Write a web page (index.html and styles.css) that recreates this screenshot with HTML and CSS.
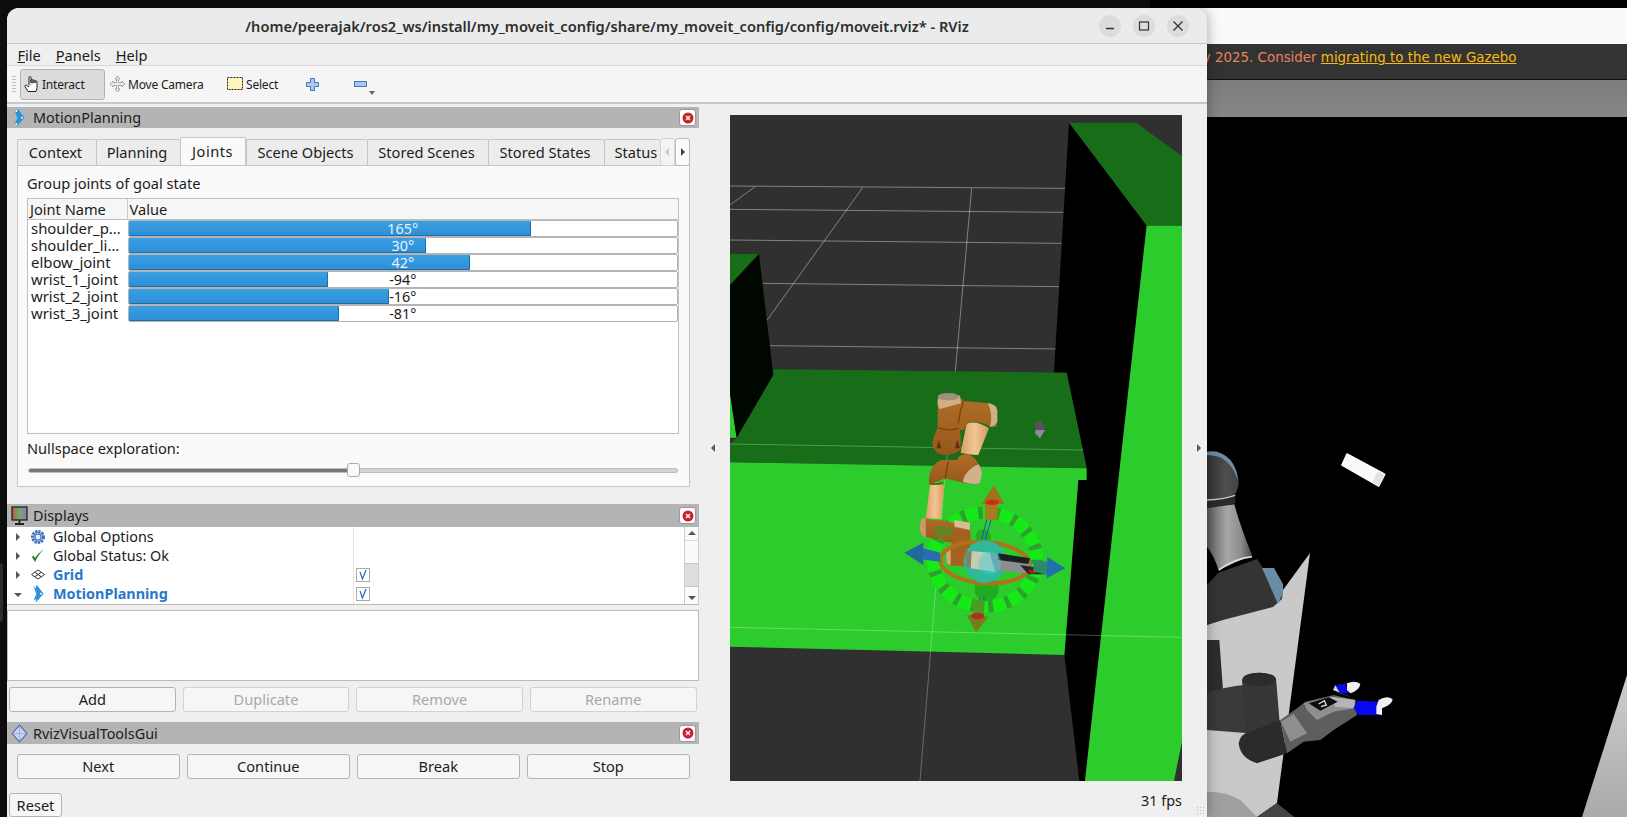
FILE: index.html
```html
<!DOCTYPE html>
<html lang="en">
<head>
    <meta charset="UTF-8">
    <title>RViz</title>
    <link rel="stylesheet" href="styles.css">
</head>
<body>

    <!-- browser window behind rviz -->
    <div class="browser">
        <div class="browser-top"></div>
        <div class="banner">January 2025. Consider <a href="#">migrating to the new Gazebo</a></div>
        <div class="browser-strip"></div>
        <svg class="browser-scene" viewBox="1150 0 477 817">
            <defs>
                <linearGradient id="link" x1="0" y1="0" x2="1" y2="0"><stop offset="0" stop-color="#5c5c5c"/><stop offset=".45" stop-color="#a8a8a8"/><stop offset=".75" stop-color="#8c8c8c"/><stop offset="1" stop-color="#4c4c4c"/></linearGradient>
                <linearGradient id="upper" x1="0" y1="0" x2="1" y2="0"><stop offset="0" stop-color="#333"/><stop offset=".6" stop-color="#4e4e4e"/><stop offset="1" stop-color="#444"/></linearGradient>
                <linearGradient id="floor" x1="0" y1="0" x2="0" y2="1"><stop offset="0" stop-color="#cdcdcd"/><stop offset="1" stop-color="#aaa"/></linearGradient>
            </defs>
            <rect x="1150" width="477" height="817" fill="#000"/>
            <polygon points="1627,675 1627,817 1582,817" fill="url(#floor)"/>
            <polygon points="1310,553 1277,803 1257,817 1207,817 1207,625 1283,590" fill="#c9c9c9"/>

            <g transform="translate(1207 440) scale(.33333)">
                <path d="M0 35Q40 30 70 60 95 95 95 130 90 165 75 170L0 185Z" fill="url(#upper)"/>
                <path d="M0 35Q40 28 70 60 90 85 93 120 75 70 40 52 20 45 0 46Z" fill="#6b8ca5"/>
                <path d="M0 185L85 170 85 190 0 210Z" fill="#2a2a2a"/>
                <path d="M0 180Q50 178 85 166" stroke="#c8c8c8" stroke-width="4" fill="none"/>
                <path d="M0 205L82 193Q100 260 135 345L35 390Q20 345 0 320Z" fill="url(#link)"/>
                <path d="M35 390Q85 355 135 350" stroke="#dedede" stroke-width="5" fill="none"/>
                <path d="M420 42L533 103 515 138 405 75Z" fill="#fafafa" stroke="#fafafa" stroke-width="5" stroke-linejoin="round"/>
                <path d="M533 103L515 138 497 127 512 95Z" fill="#e2e2e2"/>
            </g>
            <path d="M1218 573L1257 559 1265 571 1283 589 1282 599 1273 607 1223 620 1207 625V585Z" fill="#343434"/>
            <path d="M1262 568H1274L1283 584 1283 593 1278 604Z" fill="#6b8ca5"/>

            <g transform="translate(1207 640) scale(.33333)">
                <path d="M0 455Q60 455 100 480L150 531H0Z" fill="#a0a0a0"/>
                <path d="M210 490L150 531H262Z" fill="#444"/>
                <path d="M0 0H37L48 150 60 155 0 180Z" fill="#2d2d2d"/>
                <path d="M0 160Q30 145 110 135L125 280 0 270Z" fill="#3a3a3a"/>
                <path d="M105 120Q110 100 155 98 205 100 208 125L218 250 220 280 120 300Z" fill="#363636"/>
                <ellipse cx="157" cy="118" rx="50" ry="20" fill="#2c2c2c"/>
                <path d="M95 310Q100 280 130 275L220 240 240 340 150 370Q100 355 95 310Z" fill="#2b2b2b"/>
                <path d="M220 240L270 205 295 185 380 165 445 180 450 225 435 235 380 270 340 300 290 305 240 340Z" fill="#5e5e5e"/>
                <path d="M222 245L260 222 300 280 250 305Z" fill="#8f8f8f"/>
                <path d="M290 190L370 170 445 180 440 205 380 215 330 240 300 210Z" fill="#8f8f8f"/>
                <path d="M370 170L445 180 440 205 385 200Z" fill="#b5b5b5"/>
                <path d="M305 190L365 172 392 185 340 212Z" fill="#0c0c0c"/>
                <path d="M335 192L352 182 358 195 342 200" stroke="#ddd" stroke-width="4" fill="none"/>
                <path d="M378 150L385 135 400 160 440 175Z" fill="#d0d0d0"/>
                <path d="M385 135L415 132 425 160 400 160Z" fill="#0808f0"/>
                <path d="M420 130Q445 120 460 132 458 150 430 160L420 150Z" fill="#f0f0f0"/>
                <path d="M450 182L520 185 525 225 455 225 440 205Z" fill="#0808f0"/>
                <path d="M515 180Q540 165 557 178 555 195 525 205V225L508 222V200Z" fill="#f0f0f0"/>
            </g>
        </svg>
    </div>

    <div class="dock-strip"></div>

    <div class="window">
        <div class="titlebar">
            <div class="title">/home/peerajak/ros2_ws/install/my_moveit_config/share/my_moveit_config/config/moveit.rviz* - RViz</div>
            <div class="win-controls">
                <span class="win-btn"><svg width="12" height="12"><path d="M2 8.500h8" stroke="#333" stroke-width="1.300"/></svg></span>
                <span class="win-btn"><svg width="12" height="12"><rect x="1.500" y="2" width="9" height="8" fill="none" stroke="#333" stroke-width="1.200"/></svg></span>
                <span class="win-btn"><svg width="12" height="12"><path d="M1.500 1.500l9 9M10.500 1.500l-9 9" stroke="#333" stroke-width="1.300"/></svg></span>
            </div>
        </div>

        <div class="menubar">
            <span class="menu-item"><u>F</u>ile</span>
            <span class="menu-item"><u>P</u>anels</span>
            <span class="menu-item"><u>H</u>elp</span>
        </div>

        <div class="toolbar">
            <div class="grip"></div>
            <div class="tool tool-active">
                <svg width="18" height="18" viewBox="0 0 18 18"><path d="M5 10V2.500a1 1 0 0 1 2 0V8M7 8V5.500a1 1 0 0 1 2 0V8M9 8V6a1 1 0 0 1 2 0V8M11 8V6.800a1 1 0 0 1 2 0V13l-1 3.500H4L1 11.500c-.4-1.200 1-1.800 2-1L5 12" fill="#fff" stroke="#222" stroke-width="1"/></svg>
                <span>Interact</span>
            </div>
            <div class="tool tool-move">
                <svg width="17" height="18" viewBox="0 0 17 18"><path d="M8.500 1l2.500 3H9.500v3.500H13V6l3 3-3 3v-1.500H9.500V14H11l-2.500 3L6 14h1.500v-3.500H4V12L1 9l3-3v1.500h3.500V4H6z" fill="#e8e8e8" stroke="#777" stroke-width=".8" stroke-dasharray="1.500 .6"/></svg>
                <span>Move Camera</span>
            </div>
            <div class="tool tool-select">
                <svg width="17" height="14" viewBox="0 0 17 14"><rect x=".5" y=".5" width="15" height="12" fill="#fdf6b8" stroke="#222" stroke-dasharray="2 1"/></svg>
                <span>Select</span>
            </div>
            <svg class="tool-plus" width="13" height="13" viewBox="0 0 13 13"><path d="M4.500.5h4v4h4v4h-4v4h-4v-4h-4v-4h4z" fill="#a9c8ea" stroke="#3e79b8"/></svg>
            <svg class="tool-minus" width="13" height="6" viewBox="0 0 13 6"><rect x=".5" y=".5" width="12" height="5" fill="#a9c8ea" stroke="#3e79b8"/></svg>
            <span class="tool-more"></span>
        </div>

        <div class="workspace">
            <div class="left-dock">
                <div class="dock-title">
                    <svg class="chevron" width="11" height="18" viewBox="28 14 33 54"><path d="M30 19L40 15 60 40 38 65 30 60 38 40Z" fill="#2f93dc"/><circle cx="35" cy="20" r="3" fill="#fff"/><circle cx="52" cy="40" r="3" fill="#fff"/><circle cx="35" cy="60" r="3" fill="#fff"/></svg>
                    <span>MotionPlanning</span>
                    <span class="close-btn"><svg width="12" height="12"><circle cx="6" cy="6" r="5.500" fill="#c8232c"/><path d="M4 4l4 4M8 4l-4 4" stroke="#fff" stroke-width="1.400"/></svg></span>
                </div>

                <div class="planning">
                    <div class="tabs">
                        <div class="tab tab-context">Context</div>
                        <div class="tab tab-planning">Planning</div>
                        <div class="tab tab-on">Joints</div>
                        <div class="tab tab-wide">Scene Objects</div>
                        <div class="tab tab-wide">Stored Scenes</div>
                        <div class="tab tab-states">Stored States</div>
                        <div class="tab tab-status">Status</div>
                        <div class="tab-arrow arrow-off"></div>
                        <div class="tab-arrow arrow-on"></div>
                    </div>
                    <div class="tab-page">
                        <div class="group-label">Group joints of goal state</div>
                        <div class="joints">
                            <div class="joints-head">
                                <div class="col-name">Joint Name</div>
                                <div class="col-value">Value</div>
                            </div>
                            <div class="joint-row">
                                <div class="joint-name">shoulder_p...</div>
                                <div class="bar"><div class="bar-fill" style="width: 73.4%"></div><div class="bar-label on-fill">165°</div></div>
                            </div>
                            <div class="joint-row">
                                <div class="joint-name">shoulder_li...</div>
                                <div class="bar"><div class="bar-fill" style="width: 54.2%"></div><div class="bar-label on-fill">30°</div></div>
                            </div>
                            <div class="joint-row">
                                <div class="joint-name">elbow_joint</div>
                                <div class="bar"><div class="bar-fill" style="width: 62.2%"></div><div class="bar-label on-fill">42°</div></div>
                            </div>
                            <div class="joint-row">
                                <div class="joint-name">wrist_1_joint</div>
                                <div class="bar"><div class="bar-fill" style="width: 36.3%"></div><div class="bar-label">-94°</div></div>
                            </div>
                            <div class="joint-row">
                                <div class="joint-name">wrist_2_joint</div>
                                <div class="bar"><div class="bar-fill" style="width: 47.4%"></div><div class="bar-label">-16°</div></div>
                            </div>
                            <div class="joint-row">
                                <div class="joint-name">wrist_3_joint</div>
                                <div class="bar"><div class="bar-fill" style="width: 38.4%"></div><div class="bar-label">-81°</div></div>
                            </div>
                        </div>
                        <div class="null-label">Nullspace exploration:</div>
                        <div class="slider"><div class="slider-done"></div><div class="slider-handle"></div></div>
                    </div>
                </div>

                <div class="split split-a"><span class="split-dots"></span></div>

                <div class="dock-title">
                    <svg class="monitor" width="18" height="20" viewBox="0 0 18 20"><defs><linearGradient id="screen"><stop offset="0" stop-color="#c0504d"/><stop offset=".5" stop-color="#6fae6a"/><stop offset="1" stop-color="#8a78c0"/></linearGradient></defs><rect x="1" y="1" width="15" height="13" fill="url(#screen)" stroke="#222" stroke-width="1.300"/><path d="M8.500 14v3M4 18h9" stroke="#222" stroke-width="1.800"/></svg>
                    <span>Displays</span>
                    <span class="close-btn"><svg width="12" height="12"><circle cx="6" cy="6" r="5.500" fill="#c8232c"/><path d="M4 4l4 4M8 4l-4 4" stroke="#fff" stroke-width="1.400"/></svg></span>
                </div>

                <div class="tree">
                    <div class="tree-rows">
                        <div class="tree-row">
                            <span class="caret"></span>
                            <svg class="tree-icon" width="16" height="16" viewBox="0 0 16 16"><circle cx="8" cy="8" r="5.500" fill="#9dbbe8" stroke="#3f6fc0" stroke-width="3" stroke-dasharray="2.200 1"/><circle cx="8" cy="8" r="3" fill="#e6eefb" stroke="#3f6fc0"/></svg>
                            <span>Global Options</span>
                        </div>
                        <div class="tree-row">
                            <span class="caret"></span>
                            <svg class="tree-icon" width="16" height="16" viewBox="0 0 16 16"><path d="M2 9l3 5C7 9 10 5 14 1 10 4 7 7 5 10L3.500 7.500z" fill="#1e7d2a"/></svg>
                            <span>Global Status: Ok</span>
                        </div>
                        <div class="tree-row row-blue">
                            <span class="caret"></span>
                            <svg class="tree-icon" width="16" height="16" viewBox="0 0 16 16"><path d="M8 3l6.500 4.500L8 12 1.500 7.500zM4.800 5.300L11.200 9.700M11.200 5.300L4.800 9.700" fill="none" stroke="#333"/></svg>
                            <span>Grid</span>
                            <span class="check"><svg width="10" height="12" viewBox="0 0 10 12"><path d="M2 3l2.500 7L8 1" fill="none" stroke="#2c6fc0" stroke-width="1.300"/></svg></span>
                        </div>
                        <div class="tree-row row-blue">
                            <span class="caret caret-open"></span>
                            <svg class="tree-chevron" width="11" height="18" viewBox="28 14 33 54"><path d="M30 19L40 15 60 40 38 65 30 60 38 40Z" fill="#2f93dc"/><circle cx="35" cy="20" r="3" fill="#fff"/><circle cx="52" cy="40" r="3" fill="#fff"/><circle cx="35" cy="60" r="3" fill="#fff"/></svg>
                            <span>MotionPlanning</span>
                            <span class="check"><svg width="10" height="12" viewBox="0 0 10 12"><path d="M2 3l2.500 7L8 1" fill="none" stroke="#2c6fc0" stroke-width="1.300"/></svg></span>
                        </div>
                    </div>
                    <div class="tree-sep"></div>
                    <div class="scroll">
                        <span class="scroll-up"></span>
                        <div class="scroll-track"><div class="scroll-thumb"></div></div>
                        <span class="scroll-down"></span>
                    </div>
                </div>

                <div class="split split-b"><span class="split-dots"></span></div>

                <div class="help-box"></div>

                <div class="btn-row row-displays">
                    <div class="btn">Add</div>
                    <div class="btn btn-off">Duplicate</div>
                    <div class="btn btn-off">Remove</div>
                    <div class="btn btn-off">Rename</div>
                </div>

                <div class="split split-c"><span class="split-dots"></span></div>

                <div class="dock-title title-short">
                    <svg class="diamond" width="17" height="19" viewBox="0 0 16 18"><path d="M8 1l7 8-7 8-7-8z" fill="#c7d3ee" stroke="#4a62a8"/><path d="M8 1v16M1 9h14" stroke="#7d90c8" stroke-width=".5"/></svg>
                    <span>RvizVisualToolsGui</span>
                    <span class="close-btn"><svg width="12" height="12"><circle cx="6" cy="6" r="5.500" fill="#c8232c"/><path d="M4 4l4 4M8 4l-4 4" stroke="#fff" stroke-width="1.400"/></svg></span>
                </div>

                <div class="btn-row row-tools">
                    <div class="btn">Next</div>
                    <div class="btn">Continue</div>
                    <div class="btn">Break</div>
                    <div class="btn">Stop</div>
                </div>

                <div class="reset-row"><div class="btn btn-reset">Reset</div></div>
            </div>

            <div class="side-handle"><span class="arrow-left"></span></div>

            <div class="render-col">
                <svg class="render" viewBox="0 0 452 666">
                    <defs>
                        <linearGradient id="tan" x1="0" y1="0" x2="1" y2="0"><stop offset="0" stop-color="#d9a066"/><stop offset=".5" stop-color="#f3c592"/><stop offset="1" stop-color="#d59a5e"/></linearGradient>
                        <linearGradient id="brown" x1="0" y1="0" x2="0" y2="1"><stop offset="0" stop-color="#b06d28"/><stop offset="1" stop-color="#96571a"/></linearGradient>
                    </defs>
                    <rect width="452" height="666" fill="#303030"/>
                    <g transform="translate(-10 265) scale(.33333)">
                        <!-- grid behind the boxes -->
                        <g class="grid-lines">
                            <path d="M30 -582L1035 -575M30 -512L1030 -503M30 -420L1025 -410M128 -290L1017 -280M148 -103L1022 -93M30 -525L105 -580M428 -577L140 -178M755 -575L700 40"/>
                        </g>
                        <polygon points="1047,-772 1248,-772 1386,-672 1386,-463 1280,-463" fill="#186e18"/>
                        <polygon points="1047,-772 1280,-463 1095,1203 1078,1203 1033,825 1075,300 1100,265 1040,-22 1002,-22" fill="#000"/>
                        <polygon points="1280,-463 1386,-463 1386,1085 1362,1203 1095,1203" fill="#2ccc2c"/>
                        <polygon points="160,-32 1040,-22 1100,265 30,247 30,192 50,173" fill="#186e18"/>
                        <polygon points="30,40 50,173 30,173" fill="#2ccc2c"/>
                        <polygon points="30,-285 117,-378 30,-378" fill="#186e18"/>
                        <polygon points="30,-285 117,-378 160,-15 50,173 30,40" fill="#000700"/>
                        <polygon points="30,247 1100,265 1100,300 1075,300 1033,825 30,800" fill="#2ccc2c"/>
                        <g class="grid-lines lines-faint">
                            <path d="M700 40L672 320M672 320L600 1203M30 192L1090 210M30 742L1385 772"/>
                        </g>

                        <!-- small object on the table -->
                        <polygon points="947,125 965,120 975,150 960,175 945,160" fill="#54545e"/>
                        <polygon points="947,150 975,150 960,175 945,160" fill="#8c8c98"/>

                        <!-- marker ring sits behind the lower arm -->
                        <ellipse cx="795" cy="539" rx="155" ry="141" fill="none" stroke="#16ea16" stroke-width="38"/>
                        <ellipse cx="795" cy="539" rx="155" ry="141" fill="none" stroke="#2fa02f" stroke-width="38" stroke-dasharray="14 38"/>

                        <!-- arm, coords from the top of the link -->
                        <g transform="translate(585 15)">
                            <path d="M42 285Q45 235 80 225L125 225Q135 205 155 208 180 212 190 238L200 250 195 295Q170 300 145 293L90 280Q70 290 42 298Z" fill="url(#brown)"/>
                            <path d="M143 290Q150 255 190 238 202 250 200 270L195 295Q170 300 143 290Z" fill="#cfb28c"/>
                            <path d="M100 228Q95 255 90 283M45 296Q65 300 85 293" stroke="#7a4310" stroke-width="4" fill="none"/>
                            <path d="M155 115Q185 105 222 130L190 210Q165 210 137 203Z" fill="url(#tan)"/>
                            <path d="M68 60L138 40 145 48 220 55 245 65 245 125 225 125Q205 110 165 110 150 120 148 135L135 135Q140 175 135 195 110 215 75 208 52 195 52 170 60 145 68 128Z" fill="url(#brown)"/>
                            <path d="M68 42Q90 22 135 32L138 55 75 72Q66 65 68 42Z" fill="#cfb083"/>
                            <ellipse cx="100" cy="35" rx="32" ry="11" fill="#9f9078"/>
                            <path d="M218 55Q240 55 247 75L247 110Q240 125 225 125 235 85 218 55Z" fill="#cdb08a"/>
                            <path d="M145 48Q135 80 130 115M70 128Q100 140 132 130" stroke="#7a4310" stroke-width="4" fill="none"/>
                            <path d="M65 190L72 165 78 190M120 190L127 165 135 190" fill="#5a3008"/>
                            <path d="M45 300L88 300 78 402 32 400Z" fill="url(#tan)"/>
                            <path d="M20 400L30 398Q60 410 80 405L120 415Q125 403 165 415L168 480 90 470 80 460Q50 465 20 450 8 430 20 400Z" fill="url(#brown)"/>
                            <path d="M118 405L165 413 165 435 118 425Z" fill="#d9bb90"/>
                            <path d="M20 400L32 398 32 458 20 450Q8 430 20 400Z" fill="#c79a6a"/>
                        </g>
                        <polygon points="650,436 700,445 695,470 640,470" fill="#4f8f24" opacity=".7"/>
                        <path d="M695 465L750 470 750 515 740 560 680 555 677 515 695 505Z" fill="#a5631f"/>
                        <polygon points="677,505 692,507 692,555 680,553" fill="#d3a878"/>

                        <!-- interactive marker -->
                        <ellipse cx="790" cy="470" rx="23" ry="22" fill="#22a822" opacity=".8"/>
                        <circle cx="800" cy="628" r="36" fill="#1fa81f" opacity=".9"/>
                        <ellipse cx="795" cy="548" rx="134" ry="62" transform="rotate(4 795 548)" fill="none" stroke="#b0701c" stroke-width="12"/>
                        <circle cx="795" cy="545" r="64" fill="#2fb89a"/>
                        <polygon points="745,512 810,518 825,575 750,565" fill="#c4ccae"/>
                        <polygon points="735,515 755,512 752,565 738,560" fill="#7d8268"/>
                        <polygon points="810,520 930,545 920,580 825,572" fill="#8a8e8e"/>
                        <polygon points="835,520 930,535 925,552 835,540" fill="#182020"/>
                        <polygon points="900,555 980,568 975,583 925,583" fill="#2a2020"/>
                        <polygon points="925,568 950,572 945,582 928,580" fill="#b01a1a"/>
                        <circle cx="810" cy="550" r="34" fill="#3cd0e0" opacity=".45"/>
                        <path d="M800 420L785 480M813 420L795 480M778 655L782 715M792 650L788 715" stroke="#1a4fd0" stroke-width="3"/>

                        <!-- arrows -->
                        <polygon points="795,365 835,365 830,420 795,420" fill="#a8791f"/>
                        <polygon points="822,315 852,372 785,372" fill="#a2701a"/>
                        <ellipse cx="817" cy="367" rx="20" ry="8" fill="#c8301a"/>
                        <polygon points="758,660 795,660 790,715 760,715" fill="#4e9a22"/>
                        <polygon points="740,705 805,710 768,757" fill="#7a7a1e"/>
                        <ellipse cx="773" cy="708" rx="20" ry="10" fill="#b0301a"/>
                        <polygon points="605,503 660,518 660,545 605,538" fill="#2a6cb0"/>
                        <polygon points="553,518 610,488 610,555" fill="#1f6a9a"/>
                        <polygon points="940,540 985,545 985,585 940,575" fill="#2a8a6a"/>
                        <polygon points="1035,565 982,530 980,595" fill="#1e72a8"/>
                    </g>
                </svg>
                <div class="fps">31 fps</div>
            </div>

            <div class="side-handle side-right"><span class="arrow-right"></span></div>
        </div>
        <div class="resize-grip"></div>
    </div>

</body>
</html>
```

FILE: styles.css
```css
* {
    margin: 0;
    padding: 0;
    box-sizing: border-box;
}

html, body {
    width: 1627px;
    height: 817px;
    overflow: hidden;
}

body {
    background: #0f0f0f;
    font-family: "Noto Sans", sans-serif;
    font-size: 14.6px;
    color: #1c1c1c;
    position: relative;
}

/* browser behind */
.browser {
    position: absolute;
    left: 1150px;
    top: 0;
    width: 477px;
    height: 817px;
    display: flex;
    flex-direction: column;
}

.browser-top {
    margin-top: 8px;
    height: 36px;
    background: #fafafa;
}

.banner {
    height: 36px;
    line-height: 28px;
    padding-left: 10px;
    background: #333;
    border-bottom: 1px solid #111;
    color: #e8835c;
    font-family: "DejaVu Sans", sans-serif;
    font-size: 13.4px;
    white-space: nowrap;
}

.banner a {
    color: #f7bc12;
}

.browser-strip {
    height: 37px;
    background: linear-gradient(#7c7c7c, #878787);
}

.browser-scene {
    position: absolute;
    left: 0;
    top: 0;
    width: 477px;
    height: 817px;
    z-index: -1;
}

.dock-strip {
    position: absolute;
    left: 0;
    top: 563px;
    width: 3px;
    height: 59px;
    background: #303030;
    border-radius: 0 6px 6px 0;
}

/* rviz window */
.window {
    position: absolute;
    left: 7px;
    top: 8px;
    width: 1200px;
    height: 809px;
    background: #efefef;
    border-radius: 12px 12px 0 0;
    box-shadow: 0 0 14px rgba(0, 0, 0, 0.35);
    display: flex;
    flex-direction: column;
    overflow: hidden;
}

.titlebar {
    height: 36px;
    flex: none;
    display: flex;
    align-items: center;
    background: #ebebeb;
    border-bottom: 1px solid #c4c4c4;
}

.title {
    flex: 1;
    padding-left: 110px;
    text-align: center;
    font-weight: 600;
    font-size: 14.6px;
    color: #2e2e2e;
    white-space: nowrap;
}

.win-controls {
    width: 110px;
    display: flex;
    gap: 12px;
    padding-left: 2px;
}

.win-btn {
    width: 22px;
    height: 22px;
    border-radius: 50%;
    background: #dcdcdc;
    display: flex;
    align-items: center;
    justify-content: center;
}

.menubar {
    height: 22px;
    flex: none;
    display: flex;
    align-items: center;
    padding: 1px 0 0 10.400px;
    gap: 15px;
    background: #efefef;
    border-bottom: 1px solid #d8d8d8;
}

.toolbar {
    height: 38px;
    flex: none;
    display: flex;
    align-items: center;
    padding-left: 5px;
    background: #f5f5f5;
    border-bottom: 2px solid #c8c8c8;
    font-size: 12px;
    letter-spacing: -0.2px;
    position: relative;
}

.grip {
    width: 4px;
    height: 18px;
    margin-right: 4px;
    background-image: radial-gradient(#bbb 0.7px, transparent 0.8px);
    background-size: 2px 3px;
}

.tool {
    display: flex;
    align-items: center;
    height: 31px;
    white-space: nowrap;
}

.tool-active {
    width: 85px;
    padding-left: 3px;
    background: #dcdcdc;
    border: 1px solid #b4b4b4;
    border-radius: 3px;
    gap: 0;
}

.tool-move {
    margin-left: 4px;
    gap: 2px;
    width: 118px;
}

.tool-select {
    gap: 2px;
    width: 79px;
}

.tool-plus {
    flex: none;
}

.tool-minus {
    flex: none;
    margin-left: 35px;
}

.tool-more {
    width: 0;
    height: 0;
    margin-left: 2px;
    margin-top: 18px;
    border-left: 3px solid transparent;
    border-right: 3px solid transparent;
    border-top: 4px solid #666;
}

.workspace {
    flex: 1;
    display: flex;
    padding-top: 3px;
    min-height: 0;
}

.left-dock {
    width: 692px;
    flex: none;
    display: flex;
    flex-direction: column;
}

.dock-title {
    height: 23px;
    flex: none;
    display: flex;
    align-items: center;
    background: #b4b4b4;
    padding-left: 4px;
    position: relative;
    font-size: 14.400px;
}

.workspace .dock-title:first-child {
    height: 21px;
}

.title-short {
    height: 22px;
}

.dock-title svg {
    flex: none;
}

.chevron {
    margin: 0 8px 0 3px;
}

.monitor {
    margin-right: 4px;
}

.diamond {
    margin: 0 5px 0 0;
}

.close-btn {
    margin-left: auto;
    margin-right: 3px;
    width: 17px;
    height: 17px;
    background: #fff;
    border: 1px solid #999;
    border-radius: 3px;
    display: flex;
    align-items: center;
    justify-content: center;
}

.planning {
    padding: 9px 9px 0 9.500px;
    flex: none;
}

.tabs {
    display: flex;
    align-items: flex-end;
    height: 28px;
}

.tab {
    height: 26px;
    padding: 0 2px 2px 0;
    background: #ececec;
    border: 1px solid #c6c6c6;
    border-bottom: none;
    border-right: none;
    display: flex;
    align-items: center;
    justify-content: center;
    white-space: nowrap;
    overflow: hidden;
    border-radius: 2px 2px 0 0;
}

.tab-context { width: 79px; }
.tab-planning { width: 84px; }
.tab-wide { width: 121px; }
.tab-states { width: 116px; }

.tab-status {
    width: 56px;
    justify-content: flex-start;
    padding-left: 10px;
    padding-right: 0;
}

.tab-on {
    width: 66px;
    height: 28px;
    background: #fafafa;
    border: 1px solid #c6c6c6;
    border-bottom: none;
    padding: 0 0 2px;
    letter-spacing: 0.5px;
}

.tab-arrow {
    width: 15px;
    height: 28px;
    margin-bottom: -1px;
    background: #f4f4f4;
    border: 1px solid #d4d4d4;
    border-radius: 3px;
    position: relative;
}

.tab-arrow::after {
    content: "";
    position: absolute;
    top: 9px;
    border-top: 4px solid transparent;
    border-bottom: 4px solid transparent;
}

.arrow-off::after {
    left: 4px;
    border-right: 4px solid #ccc;
}

.arrow-on {
    background: #fafafa;
    border-color: #bbb;
}

.arrow-on::after {
    left: 5px;
    border-left: 4px solid #444;
}

.tab-page {
    height: 322px;
    background: #fafafa;
    border: 1px solid #c6c6c6;
    padding: 7px 10px 0 9.500px;
}

.group-label {
    line-height: 20px;
}

.joints {
    margin-top: 5px;
    height: 236px;
    background: #fff;
    border: 1px solid #c0c0c0;
}

.joints-head {
    height: 21px;
    display: flex;
    align-items: center;
    background: #f6f6f6;
    border-bottom: 1px solid #c0c0c0;
}

.col-name {
    width: 99.600px;
    padding-left: 2px;
    border-right: 1px solid #ccc;
    line-height: 20px;
    white-space: nowrap;
}

.col-value {
    padding-left: 2px;
}

.joint-row {
    height: 17.050px;
    display: grid;
    grid-template-columns: 99.600px 1fr;
}

.joint-name {
    padding-left: 3px;
    line-height: 17px;
    font-size: 14.900px;
    white-space: nowrap;
}

.bar {
    position: relative;
    background: #fff;
    border: 1px solid #b4b4b4;
    border-radius: 2px;
    margin-bottom: 0.500px;
}

.bar-fill {
    position: absolute;
    left: 0;
    top: 0;
    bottom: 0;
    background: linear-gradient(#3a9fe4, #2f8fd6);
    border-right: 1px solid #1f6ea8;
    border-bottom: 1px solid #1f6ea8;
    border-radius: 1px;
}

.bar-label {
    position: relative;
    text-align: center;
    line-height: 15px;
    font-size: 14.400px;
}

.on-fill {
    color: #e8f2fa;
}

.null-label {
    margin-top: 4px;
    line-height: 20px;
}

.slider {
    position: relative;
    height: 5px;
    margin: 10px 1px 0;
    background: #d4d4d4;
    border: 1px solid #bbb;
    border-radius: 3px;
}

.slider-done {
    width: 50%;
    height: 100%;
    background: #777;
    border-radius: 3px 0 0 3px;
}

.slider-handle {
    position: absolute;
    left: 50%;
    top: -6px;
    width: 13px;
    height: 14px;
    margin-left: -6px;
    background: #fafafa;
    border: 1px solid #aaa;
    border-radius: 3px;
}

.split {
    flex: none;
    display: flex;
    align-items: center;
    justify-content: center;
}

.split-a { height: 17px; }
.split-b { height: 5px; }
.split-c { height: 10px; }

.split-dots {
    width: 17px;
    height: 1.500px;
    background-image: radial-gradient(#aaa 0.6px, transparent 0.7px);
    background-size: 3px 2px;
}

.tree {
    height: 78px;
    flex: none;
    display: flex;
    background: #fff;
    border-bottom: 1px solid #bbb;
    position: relative;
    font-size: 14.400px;
}

.tree-rows {
    flex: 1;
}

.tree-row {
    height: 19px;
    display: flex;
    align-items: center;
    white-space: nowrap;
    position: relative;
}

.row-blue {
    color: #2878c8;
    font-weight: 700;
}

.caret {
    width: 0;
    height: 0;
    margin-left: 9px;
    margin-right: 10px;
    border-top: 4px solid transparent;
    border-bottom: 4px solid transparent;
    border-left: 4px solid #555;
    flex: none;
}

.caret-open {
    margin-left: 7px;
    margin-right: 8px;
    margin-top: 2px;
    border-left: 4px solid transparent;
    border-right: 4px solid transparent;
    border-top: 4px solid #555;
    border-bottom: none;
}

.tree-icon {
    flex: none;
    margin-right: 7px;
}

.tree-chevron {
    flex: none;
    margin: 0 9px 0 3px;
}

.check {
    position: absolute;
    left: 349px;
    top: 3px;
    width: 14px;
    height: 14px;
    background: #fff;
    border: 1px solid #aaa;
    display: flex;
    align-items: center;
    justify-content: center;
}

.tree-sep {
    position: absolute;
    left: 346px;
    top: 0;
    bottom: 0;
    width: 1px;
    background: #e2e2e2;
}

.scroll {
    width: 15px;
    flex: none;
    display: flex;
    flex-direction: column;
    align-items: center;
    background: #fafafa;
    border-left: 1px solid #ccc;
    border-right: 1px solid #ccc;
}

.scroll-track {
    flex: 1;
    width: 100%;
    margin: 5px 0;
    padding-top: 22px;
    border-top: 1px solid #ddd;
}

.scroll-thumb {
    height: 24px;
    background: #dedede;
    border-top: 1px solid #c8c8c8;
    border-bottom: 1px solid #c8c8c8;
}

.scroll-up,
.scroll-down {
    width: 0;
    height: 0;
    border-left: 4px solid transparent;
    border-right: 4px solid transparent;
    flex: none;
}

.scroll-up {
    margin-top: 4px;
    border-bottom: 4px solid #555;
}

.scroll-down {
    margin-bottom: 4px;
    border-top: 4px solid #555;
}

.help-box {
    height: 71px;
    flex: none;
    background: #fff;
    border: 1px solid #bbb;
}

.btn-row {
    display: grid;
    flex: none;
    grid-template-columns: repeat(4, 1fr);
}

.row-displays {
    height: 25px;
    margin-top: 6px;
    padding: 0 2.500px 0 2px;
    gap: 7px;
}

.row-tools {
    height: 25px;
    margin-top: 10px;
    padding: 0 9px 0 9.500px;
    gap: 6.500px;
}

.btn {
    height: 25px;
    padding-bottom: 2px;
    background: #f6f6f6;
    border: 1px solid #b4b4b4;
    border-radius: 3px;
    display: flex;
    align-items: center;
    justify-content: center;
}

.btn-off {
    color: #a8a8a8;
    border-color: #d2d2d2;
}

.reset-row {
    margin-top: 14px;
    padding-left: 2px;
}

.btn-reset {
    width: 53px;
    height: 24px;
    padding-bottom: 0;
}

.side-handle {
    width: 31px;
    flex: none;
    display: flex;
    align-items: center;
    justify-content: center;
    height: 682px;
    padding-right: 4px;
}

.side-right {
    width: 25px;
    padding: 0 0 0 8px;
}

.arrow-left,
.arrow-right {
    width: 0;
    height: 0;
    border-top: 4px solid transparent;
    border-bottom: 4px solid transparent;
}

.arrow-left {
    border-right: 4px solid #555;
}

.arrow-right {
    border-left: 4px solid #555;
}

.render-col {
    width: 452px;
    flex: none;
}

.render {
    display: block;
    width: 452px;
    height: 666px;
    margin-top: 8px;
}

.grid-lines path {
    stroke: #fff;
    stroke-opacity: 0.4;
    stroke-width: 3;
    fill: none;
}

.lines-faint path {
    stroke-opacity: 0.28;
}

.fps {
    margin-top: 11px;
    text-align: right;
    font-size: 14.400px;
    line-height: 18px;
}

.resize-grip {
    position: absolute;
    right: 1px;
    bottom: 1px;
    width: 10px;
    height: 10px;
    background-image: radial-gradient(#bbb 0.7px, transparent 0.8px);
    background-size: 3px 3px;
}
```
